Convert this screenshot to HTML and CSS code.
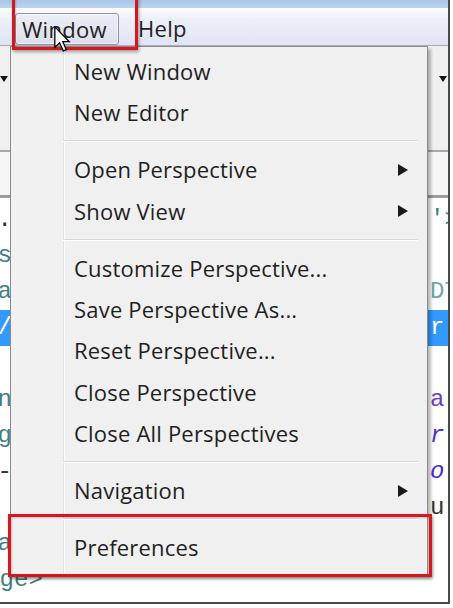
FILE: index.html
```html
<!DOCTYPE html>
<html>
<head>
<meta charset="utf-8">
<link rel="stylesheet" href="styles.css">
</head>
<body>
<div class="shot">
  <div class="frame">
    <div class="titlestrip"></div>
    <div class="menubar">
      <div class="mb-item mb-active">Window</div>
      <div class="mb-item">Help</div>
    </div>
    <div class="toolbar">
      <span class="tri-down"></span>
      <span class="tri-down"></span>
    </div>
    <div class="tabs"></div>
    <div class="editor">
      <div class="line"><span class="l dark">&lt;a .</span><span class="r"><span class="teal">'&gt;</span></span></div>
      <div class="line"><span class="l teal">&lt;s</span><span class="r"></span></div>
      <div class="line"><span class="l teal">&lt;a</span><span class="r"><span class="teal2">DT</span></span></div>
      <div class="line sel"><span class="l">/</span><span class="r">r</span></div>
      <div class="line"><span class="l"></span><span class="r"></span></div>
      <div class="line"><span class="l teal">&lt;n</span><span class="r"><span class="purple">a</span></span></div>
      <div class="line"><span class="l teal">&lt;g</span><span class="r"><span class="blue">r</span></span></div>
      <div class="line"><span class="l dark">-</span><span class="r"><span class="blue">o</span></span></div>
      <div class="line"><span class="l"></span><span class="r"><span class="dark">u</span></span></div>
      <div class="line"><span class="l teal">&lt;a</span><span class="r"></span></div>
      <div class="line"><span class="l teal wide">&lt;/page&gt;</span><span class="r"></span></div>
    </div>
  </div>

  <div class="menu">
    <div class="mi">New Window</div>
    <div class="mi">New Editor</div>
    <div class="sep"></div>
    <div class="mi sub">Open Perspective<span class="tri-right"></span></div>
    <div class="mi sub">Show View<span class="tri-right"></span></div>
    <div class="sep"></div>
    <div class="mi">Customize Perspective...</div>
    <div class="mi">Save Perspective As...</div>
    <div class="mi">Reset Perspective...</div>
    <div class="mi">Close Perspective</div>
    <div class="mi">Close All Perspectives</div>
    <div class="sep"></div>
    <div class="mi sub">Navigation<span class="tri-right"></span></div>
    <div class="sep"></div>
    <div class="mi">Preferences</div>
  </div>

  <div class="redbox rb-window"></div>
  <div class="redbox rb-pref"></div>

  <svg class="cursor" width="17" height="26" viewBox="0 0 13 20">
    <path d="M0.6 0.6 L0.6 16.4 L4.3 12.9 L7.1 19.2 L9.4 18.2 L6.7 12 L11.6 12 Z" fill="#fff" stroke="#000" stroke-width="1" stroke-linejoin="miter"/>
  </svg>
</div>
</body>
</html>
```

FILE: styles.css
```css
* { box-sizing: border-box; }
html, body { margin: 0; padding: 0; background: #fff; }
.shot {
  position: relative;
  width: 453px;
  height: 608px;
  overflow: hidden;
  background: #fff;
  font-family: "Open Sans", "Noto Sans", sans-serif;
}
.frame {
  width: 450px;
  height: 604px;
  border-right: 2px solid #4a4a4a;
  border-bottom: 2px solid #4a4a4a;
  display: flex;
  flex-direction: column;
  overflow: hidden;
  background: #fff;
}
.titlestrip {
  height: 8px;
  background: linear-gradient(#a9c6e8, #bcd3ec);
  flex: none;
}
.menubar {
  height: 38px;
  flex: none;
  display: flex;
  align-items: flex-start;
  padding-left: 15px;
  background: linear-gradient(#fbfcfe 0%, #eef0f9 30%, #dfe3f4 100%);
  border-bottom: 1px solid #a9b0c6;
  font-size: 22px;
  color: #222;
}
.mb-item {
  height: 32px;
  margin-top: 5px;
  line-height: 30px;
  padding: 0 6px;
  letter-spacing: 0.3px;
}
.mb-active {
  width: 104px;
  border: 1px solid #8f939c;
  border-radius: 3px;
  background: linear-gradient(#eceef5, #dcdfeb);
  box-shadow: inset 0 0 0 1px rgba(255,255,255,0.6);
}
.mb-item + .mb-item { margin-left: 13px; }
.toolbar {
  height: 106px;
  flex: none;
  background: #f0f0f0;
  border-bottom: 2px solid #a8a8a8;
  display: flex;
  justify-content: space-between;
  align-items: flex-start;
  padding: 30px 0 0 0;
}
.tri-down {
  width: 0; height: 0;
  border-left: 4px solid transparent;
  border-right: 4px solid transparent;
  border-top: 6px solid #111;
}
.tri-down + .tri-down { margin-right: 1px; }
.tabs {
  height: 46px;
  flex: none;
  background: #f6f6f6;
  border-bottom: 3px solid #9c9c9c;
}
.editor {
  flex: 1;
  padding-top: 4px;
  background: #fff;
  font-family: "Liberation Mono", "DejaVu Sans Mono", monospace;
  font-size: 24px;
}
.line {
  height: 36px;
  line-height: 36px;
  display: flex;
  justify-content: space-between;
  white-space: nowrap;
}
.line.sel { background: #3399ff; color: #fff; }
.l {
  width: 12px;
  overflow: hidden;
  display: flex;
  justify-content: flex-end;
}
.l.wide { justify-content: flex-start; margin-left: -58px; width: 140px; }
.r {
  width: 18px;
  overflow: hidden;
}
.teal { color: #3f7f7f; }
.teal2 { color: #6fa6a6; }
.dark { color: #333; }
.purple { color: #6a3fbf; }
.blue { color: #4a2cd6; font-style: italic; }

.menu {
  position: absolute;
  left: 10px;
  top: 46px;
  width: 418px;
  border: 1px solid #8a8a8a;
  padding: 4px 0 6px 0;
  background: linear-gradient(to right, #f1f1f1 52px, #e0e1e1 52px, #e0e1e1 53px, #fcfcfc 53px, #fcfcfc 54px, #f0f0f0 54px);
  box-shadow: 3px 3px 3px rgba(0,0,0,0.28);
  font-size: 22px;
  color: #1f1f1f;
}
.mi {
  height: 41.33px;
  line-height: 41.33px;
  padding-left: 63px;
  padding-right: 19px;
  white-space: nowrap;
  letter-spacing: 0.2px;
}
.mi.sub {
  display: flex;
  justify-content: space-between;
  align-items: center;
}
.tri-right {
  width: 0; height: 0;
  border-top: 6.5px solid transparent;
  border-bottom: 6.5px solid transparent;
  border-left: 10px solid #1a1a1a;
}
.sep {
  height: 2px;
  border-top: 1px solid #d9d9d9;
  border-bottom: 1px solid #ffffff;
  margin: 6.83px 9px 6.84px 52px;
}
.redbox {
  position: absolute;
  border: 3px solid #d8161d;
  box-shadow: 1px 2px 3px rgba(0,0,0,0.35), inset 1px 1px 2px rgba(0,0,0,0.2);
}
.rb-window { left: 12px; top: -10px; width: 126px; height: 60px; }
.rb-pref { left: 8px; top: 514px; width: 424px; height: 63px; }
.cursor {
  position: absolute;
  left: 54px;
  top: 26px;
}
```
